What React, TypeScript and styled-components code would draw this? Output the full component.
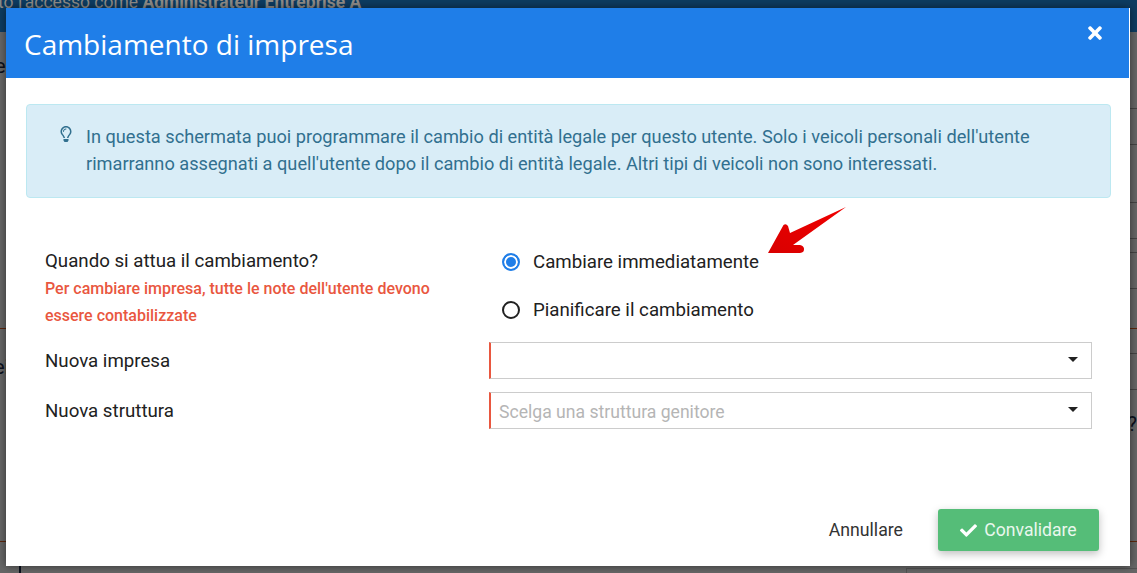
/* Fenêtre de changement d'entreprise */

import React from 'react';
import styled, { createGlobalStyle } from 'styled-components';
import { FaCheck, FaRegLightbulb, FaTimes } from 'react-icons/fa';

const GlobalStyle = createGlobalStyle`
  html, body {
    margin: 0;
    height: 100%;
    overflow: hidden;
    background: #fff;
    font-family: Roboto, "Liberation Sans", sans-serif;
  }
`

type backgroundRow = {
  height: number;
  orange?: boolean;
  text?: string;
  textLift?: number;
  textShift?: number;
  endText?: string;
}

const backgroundRows: backgroundRow[] = [
  { height: 78, text: 'e', textLift: 31, textShift: -5 },
  { height: 36 },
  { height: 58 },
  { height: 36 },
  { height: 14 },
  { height: 36 },
  { height: 39, orange: true },
  { height: 26 },
  { height: 36, text: 'ei', textLift: 11, textShift: -6 },
  { height: 151, orange: true, endText: '?' },
]

export default function App() {
  return (
    <>
      <GlobalStyle />
      <PageBehind>
        <TopBar>
          <TopBarText>to l'accesso come <b>Administrateur Entreprise A</b></TopBarText>
        </TopBar>
        {backgroundRows.map((row, i) => (
          <BackRow key={i} $height={row.height} $orange={row.orange}>
            <BackText $lift={row.textLift} $shift={row.textShift}>{row.text}</BackText>
            <BackEndText>{row.endText}</BackEndText>
          </BackRow>
        ))}
        <BottomRow>
          <BottomTick />
          <BottomCell />
        </BottomRow>
      </PageBehind>
      <Overlay />
      <ModalArea>
        <Modal>
          <ModalHeader>
            <ModalTitle>Cambiamento di impresa</ModalTitle>
            <CloseButton><FaTimes /></CloseButton>
          </ModalHeader>
          <ModalBody>
            <InfoBox>
              <InfoIcon><FaRegLightbulb /></InfoIcon>
              <InfoText>
                In questa schermata puoi programmare il cambio di entità legale per questo utente. Solo i veicoli personali dell'utente rimarranno assegnati a quell'utente dopo il cambio di entità legale. Altri tipi di veicoli non sono interessati.
              </InfoText>
            </InfoBox>
            <WhenRow>
              <div>
                <FieldLabel>Quando si attua il cambiamento?</FieldLabel>
                <WarningText>Per cambiare impresa, tutte le note dell'utente devono essere contabilizzate</WarningText>
              </div>
              <RadioGroup>
                <RadioRow>
                  <RadioCircle $checked />
                  Cambiare immediatamente
                </RadioRow>
                <RadioRow>
                  <RadioCircle />
                  Pianificare il cambiamento
                </RadioRow>
              </RadioGroup>
            </WhenRow>
            <SelectRow>
              <FieldLabel>Nuova impresa</FieldLabel>
              <SelectBox>
                <Placeholder />
                <Caret />
              </SelectBox>
            </SelectRow>
            <SelectRow>
              <FieldLabel>Nuova struttura</FieldLabel>
              <SelectBox>
                <Placeholder>Scelga una struttura genitore</Placeholder>
                <Caret />
              </SelectBox>
            </SelectRow>
          </ModalBody>
          <ModalFooter>
            <CancelButton>Annullare</CancelButton>
            <ConfirmButton><FaCheck /> Convalidare</ConfirmButton>
          </ModalFooter>
          <RedArrow viewBox="0 0 90 56" aria-hidden="true">
            <defs>
              <linearGradient id="arrowRed" x1="0" y1="1" x2="1" y2="0">
                <stop offset="0" stopColor="#d90000" />
                <stop offset="1" stopColor="#f00000" />
              </linearGradient>
            </defs>
            <path
              fill="url(#arrowRed)"
              d="M80 1 L24 27 L22 20 Q20 17 17.5 19 L2 47 L34 47 Q38.5 46.5 38 42.5 Q37.5 39.5 34 39 L27 39 Z"
            />
          </RedArrow>
        </Modal>
      </ModalArea>
    </>
  );
}

const PageBehind = styled.div`
  display: flex;
  flex-direction: column;
  height: 573px;
  overflow: hidden;
  color: #1a2a4a;
  font-size: 20px;
`

const TopBar = styled.div`
  height: 32px;
  flex: none;
  background: #2196f3;
  overflow: hidden;
`

const TopBarText = styled.div`
  position: relative;
  z-index: 1;
  margin: -7px 0 0 -2px;
  color: #8f8c88;
  font-size: 17.5px;
  line-height: 18px;
  white-space: nowrap;
`

const BackRow = styled.div<{ $height: number; $orange?: boolean }>`
  box-sizing: border-box;
  height: ${(p) => p.$height}px;
  flex: none;
  display: flex;
  justify-content: space-between;
  align-items: flex-end;
  border-bottom: 1px solid ${(p) => (p.$orange ? '#e5601f' : 'transparent')};
  background: ${(p) => (p.$orange ? 'none' : 'linear-gradient(#aaa, #aaa) right bottom / 12px 1px no-repeat')};
`

const BackText = styled.span<{ $lift?: number; $shift?: number }>`
  line-height: 24px;
  margin-bottom: ${(p) => p.$lift || 0}px;
  margin-left: ${(p) => p.$shift || 0}px;
`

const BackEndText = styled.span`
  line-height: 24px;
  margin-bottom: 105px;
`

const BottomRow = styled.div`
  flex: 1;
  display: flex;
  justify-content: space-between;
`

const BottomTick = styled.div`
  width: 2px;
  margin-left: 19px;
  background: #1a2a4a;
`

const BottomCell = styled.div`
  width: 230px;
  margin-top: 26px;
  border-left: 1px solid #ccc;
  border-top: 1px solid #ccc;
`

const Overlay = styled.div`
  position: absolute;
  inset: 0;
  background: rgba(0, 0, 0, 0.6);
`

const ModalArea = styled.div`
  position: absolute;
  inset: 0;
  z-index: 2;
  box-sizing: border-box;
  padding: 8px 7px 7px 6px;
`

const Modal = styled.div`
  position: relative;
  box-sizing: border-box;
  height: 100%;
  display: flex;
  flex-direction: column;
  background: #fff;
  box-shadow: 0 0 8px rgba(0, 0, 0, 0.5);
  color: #212121;
`

const ModalHeader = styled.div`
  box-sizing: border-box;
  height: 70px;
  flex: none;
  margin-right: 1px;
  padding: 0 24px 0 18px;
  display: flex;
  justify-content: space-between;
  background: #1f7ee8;
  color: #fff;
`

const ModalTitle = styled.h4`
  margin: 0;
  font-family: "Open Sans", sans-serif;
  font-size: 28px;
  font-weight: 400;
  line-height: 72px;
`

const CloseButton = styled.span`
  font-size: 20px;
  line-height: 20px;
  margin-top: 15px;
`

const ModalBody = styled.div`
  flex: 1;
  padding: 26px 19px 0 20px;
  font-size: 18.7px;
`

const InfoBox = styled.div`
  box-sizing: border-box;
  height: 94px;
  display: flex;
  padding: 18px 40px 0 31px;
  background: #d9edf7;
  border: 1px solid #bce8f1;
  border-radius: 4px;
  color: #31708f;
  font-size: 18.2px;
  line-height: 27px;
`

const InfoIcon = styled.span`
  flex: none;
  width: 28px;
  font-size: 16px;
  line-height: 27px;
`

const InfoText = styled.div`
  flex: 1;
`

const WhenRow = styled.div`
  display: grid;
  grid-template-columns: 444px 1fr;
  margin: 51px 0 9px;
  padding-left: 19px;
`

const FieldLabel = styled.div`
  line-height: 24px;
  color: #212121;
`

const WarningText = styled.div`
  width: 400px;
  margin-top: 2px;
  font-size: 16px;
  font-weight: 500;
  line-height: 27px;
  color: #e9573f;
`

const RadioGroup = styled.div`
  display: flex;
  flex-direction: column;
  gap: 24px;
  padding: 1px 0 0 13px;
`

const RadioRow = styled.label`
  display: flex;
  align-items: center;
  gap: 13px;
  line-height: 24px;
`

const RadioCircle = styled.span<{ $checked?: boolean }>`
  box-sizing: border-box;
  width: 18px;
  height: 18px;
  border-radius: 50%;
  border: 2px solid ${(p) => (p.$checked ? '#1f7ee8' : '#212121')};
  background: ${(p) => (p.$checked ? '#1f7ee8' : '#fff')};
  box-shadow: ${(p) => (p.$checked ? 'inset 0 0 0 2px #fff' : 'none')};
`

const SelectRow = styled.div`
  display: grid;
  grid-template-columns: 444px 603px;
  align-items: center;
  margin-top: 13px;
  padding-left: 19px;
`

const SelectBox = styled.div`
  box-sizing: border-box;
  height: 37px;
  display: flex;
  align-items: center;
  padding: 2px 13px 0 8px;
  border: 1px solid #ccc;
  border-left: 2px solid #e9573f;
`

const Placeholder = styled.span`
  flex: 1;
  color: #b5b5b5;
  font-size: 17.6px;
`

const Caret = styled.span`
  width: 0;
  height: 0;
  margin-bottom: 4px;
  border-left: 5.5px solid transparent;
  border-right: 5.5px solid transparent;
  border-top: 5px solid #212121;
`

const ModalFooter = styled.div`
  flex: none;
  display: flex;
  justify-content: flex-end;
  align-items: center;
  gap: 35px;
  padding: 0 31px 15px 0;
`

const CancelButton = styled.span`
  font-size: 17.7px;
  color: #333;
`

const ConfirmButton = styled.span`
  box-sizing: border-box;
  width: 161px;
  height: 42px;
  display: flex;
  align-items: center;
  justify-content: center;
  gap: 7px;
  background: #55bd78;
  border-radius: 3px;
  color: #eaf7ee;
  font-size: 17.6px;
  box-shadow: 0 3px 8px rgba(0, 0, 0, 0.25);
  & > svg {
    font-size: 17px;
    color: #fff;
  }
`

const RedArrow = styled.svg`
  position: absolute;
  left: 760px;
  top: 198px;
  width: 90px;
  height: 56px;
`
